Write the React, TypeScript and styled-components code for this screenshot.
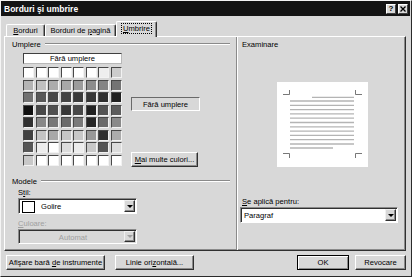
import React from 'react';
import styled, { createGlobalStyle } from 'styled-components';

const GlobalStyle = createGlobalStyle`
  html, body {
    margin: 0;
    padding: 0;
    background: #d8d8d8;
  }
  body {
    font-family: "Liberation Sans", Arial, sans-serif;
    font-size: 7.6px;
    color: #000;
  }
  #root {
    width: 412px;
    height: 277px;
  }
`;

const palette = [
  ['#ffffff', '#ffffff', '#ffffff', '#ffffff', '#ffffff', '#ffffff', '#eeeeee', '#cccccc'],
  ['#b4b4b4', '#c0c0c0', '#acacac', '#a8a8a8', '#9c9c9c', '#8c8c8c', '#848484', '#747474'],
  ['#727272', '#585858', '#484848', '#444444', '#3a3a3a', '#363636', '#2e2e2e', '#202020'],
  ['#101010', '#484848', '#505050', '#383838', '#484848', '#222222', '#545454', '#5c5c5c'],
  ['#303030', '#888888', '#787878', '#6c6c6c', '#7a7a7a', '#262626', '#6a6a6a', '#8a8a8a'],
  ['#404040', '#c4c4c4', '#a8a8a8', '#c6c6c6', '#c8c8c8', '#989898', '#303030', '#acacac'],
  ['#565656', '#ececec', '#ffffff', '#dcdcdc', '#ececec', '#c8c8c8', '#565656', '#dcdcdc'],
  ['#c8c8c8', '#ffffff', '#ffffff', '#ffffff', '#ffffff', '#ffffff', '#ffffff', '#ffffff'],
];

const Window = styled.div`
  box-sizing: border-box;
  width: 412px;
  height: 277px;
  background: #d8d8d8;
  border: 1px solid;
  border-color: #f4f4f4 #2a2a2a #2a2a2a #f4f4f4;
  display: flex;
  flex-direction: column;
`;

const TitleBar = styled.div`
  height: 15px;
  margin-right: 1px;
  padding: 0 2px 0 3px;
  background: #141414;
  display: flex;
  align-items: center;
  justify-content: space-between;
`;

const Title = styled.span`
  color: #fff;
  font-weight: bold;
  font-size: 8.5px;
`;

const CaptionButtons = styled.div`
  display: flex;
  gap: 2px;
`;

const CaptionButton = styled.div`
  box-sizing: border-box;
  width: 10px;
  height: 10px;
  background: #d8d8d8;
  border: 1px solid;
  border-color: #fff #404040 #404040 #fff;
  display: flex;
  align-items: center;
  justify-content: center;
  font-weight: bold;
  font-size: 8px;
  line-height: 1;
`;

const Body = styled.div`
  flex: 1;
  display: flex;
  flex-direction: column;
  padding: 0 5px 0 3px;
`;

const TabStrip = styled.div`
  margin-top: 6px;
  height: 14px;
  padding-left: 2px;
  display: flex;
  align-items: flex-end;
  position: relative;
  z-index: 1;
`;

const Tab = styled.div<{ $active?: boolean; $w: number }>`
  box-sizing: border-box;
  width: ${(p) => p.$w}px;
  height: ${(p) => (p.$active ? 16 : 12)}px;
  margin-bottom: ${(p) => (p.$active ? -1 : 0)}px;
  background: #d8d8d8;
  border: 1px solid;
  border-color: #fff #303030 transparent #fff;
  border-bottom: none;
  border-radius: 2px 2px 0 0;
  box-shadow: inset -1px 0 #8a8a8a;
  display: flex;
  align-items: center;
  justify-content: center;
  padding-bottom: ${(p) => (p.$active ? 2 : 0)}px;
`;

const FocusText = styled.span`
  outline: 1px dotted #000;
  outline-offset: 0;
  padding: 0 1px;
`;

const TabPanel = styled.div`
  box-sizing: border-box;
  height: 215px;
  border: 1px solid;
  border-color: #fff #303030 #303030 #fff;
  box-shadow: inset -1px -1px #8a8a8a;
  display: flex;
`;

const LeftCol = styled.div`
  width: 231px;
  display: flex;
  flex-direction: column;
`;

const Legend = styled.div<{ $top: number }>`
  margin-top: ${(p) => p.$top}px;
  height: 8px;
  padding: 0 6px 0 7px;
  display: flex;
  align-items: center;
  gap: 4px;
  &::after {
    content: '';
    flex: 1;
    height: 0;
    border-top: 1px solid #8a8a8a;
    border-bottom: 1px solid #fff;
  }
`;

const FillArea = styled.div`
  margin-top: 5px;
  height: 114px;
  padding-left: 18px;
  display: flex;
`;

const PaletteCol = styled.div`
  width: 99px;
  display: flex;
  flex-direction: column;
`;

const NoFillCell = styled.div`
  box-sizing: border-box;
  height: 11px;
  background: #fff;
  border: 1px solid;
  border-color: #404040 #b8b8b8 #b8b8b8 #404040;
  display: flex;
  align-items: center;
  justify-content: center;
`;

const Grid = styled.div`
  margin-top: 3px;
  display: grid;
  grid-template-columns: repeat(8, 11px);
  grid-auto-rows: 11px;
  gap: 1.5px;
`;

const Swatch = styled.div<{ $c: string }>`
  box-sizing: border-box;
  background: ${(p) => p.$c};
  border: 1px solid;
  border-color: #484848 #f2f2f2 #f2f2f2 #484848;
`;

const SideCol = styled.div`
  margin-left: 9px;
  display: flex;
  flex-direction: column;
`;

const ShadeDisplay = styled.div`
  box-sizing: border-box;
  margin-top: 44px;
  width: 69px;
  height: 14px;
  border: 1px solid;
  border-color: #6a6a6a #fff #fff #6a6a6a;
  display: flex;
  align-items: center;
  justify-content: center;
`;

const Button = styled.div<{ $w: number; $top?: number; $default?: boolean }>`
  box-sizing: border-box;
  width: ${(p) => p.$w}px;
  height: 15px;
  margin-top: ${(p) => p.$top ?? 0}px;
  background: #d8d8d8;
  border: 1px solid;
  border-color: ${(p) => (p.$default ? '#000' : '#fff #303030 #303030 #fff')};
  box-shadow: ${(p) =>
    p.$default ? 'inset 1px 1px #fff, inset -1px -1px #8a8a8a' : 'inset -1px -1px #8a8a8a'};
  display: flex;
  align-items: center;
  justify-content: center;
  white-space: nowrap;
`;

const FieldLabel = styled.div<{ $top: number; $disabled?: boolean }>`
  margin: ${(p) => p.$top}px 0 0 13px;
  height: 9px;
  display: flex;
  align-items: center;
  color: ${(p) => (p.$disabled ? '#a0a0a0' : '#000')};
`;

const Select = styled.div<{ $w: number; $h: number; $disabled?: boolean }>`
  box-sizing: border-box;
  width: ${(p) => p.$w}px;
  height: ${(p) => p.$h}px;
  margin: 1px 0 0 13px;
  background: ${(p) => (p.$disabled ? '#d8d8d8' : '#fff')};
  color: ${(p) => (p.$disabled ? '#a0a0a0' : '#000')};
  border: 1px solid;
  border-color: #8a8a8a #fff #fff #8a8a8a;
  box-shadow: inset 1px 1px #303030;
  display: flex;
  align-items: stretch;
  padding: 1px 1px 0 1px;
`;

const SelectValue = styled.div<{ $center?: boolean }>`
  flex: 1;
  display: flex;
  align-items: center;
  justify-content: ${(p) => (p.$center ? 'center' : 'flex-start')};
  gap: 6px;
  padding-left: 2px;
`;

const StyleSwatch = styled.div`
  box-sizing: border-box;
  width: 13px;
  height: 12px;
  background: #fff;
  border: 1px solid #000;
`;

const ArrowButton = styled.div<{ $disabled?: boolean }>`
  box-sizing: border-box;
  width: 11px;
  margin-bottom: 1px;
  background: #d8d8d8;
  border: 1px solid;
  border-color: #f0f0f0 #303030 #303030 #f0f0f0;
  box-shadow: inset -1px -1px #8a8a8a;
  display: flex;
  align-items: center;
  justify-content: center;
  &::after {
    content: '';
    border-left: 3px solid transparent;
    border-right: 3px solid transparent;
    border-top: 3px solid ${(p) => (p.$disabled ? '#a0a0a0' : '#000')};
  }
`;

const RightCol = styled.div`
  flex: 1;
  margin-right: 1px;
  border-left: 1px solid #8a8a8a;
  box-shadow: inset 1px 0 #fff;
  padding-left: 3px;
  display: flex;
  flex-direction: column;
`;

const SectionTitle = styled.div<{ $top: number }>`
  margin: ${(p) => p.$top}px 0 0 2px;
  height: 9px;
  display: flex;
  align-items: center;
`;

const Preview = styled.svg`
  display: block;
  margin: 33px 0 0 37px;
`;

const RightSelect = styled(Select)`
  margin: 1px 0 0 0;
`;

const ButtonRow = styled.div`
  margin-top: 4px;
  padding-left: 2px;
  display: flex;
  align-items: center;
`;

const Spacer = styled.div`
  flex: 1;
`;

const Gap = styled.div<{ $w: number }>`
  width: ${(p) => p.$w}px;
`;

function PagePreview() {
  const lines = Array.from({ length: 11 }, (_, i) => 19 + i * 4.3);
  return (
    <Preview width="91" height="85" viewBox="0 0 91 85">
      <rect width="91" height="85" fill="#fff" />
      <g stroke="#555" strokeWidth="0.8" fill="none">
        <path d="M6 12.5H12.5V8" />
        <path d="M85 12.5H78.5V8" />
        <path d="M6 71.5H12.5V76" />
        <path d="M85 71.5H78.5V76" />
      </g>
      <g stroke="#b4b4b4" strokeWidth="1.3">
        <line x1="35" y1="15.3" x2="77" y2="15.3" />
        {lines.map((y) => (
          <line key={y} x1="13" y1={y} x2="77" y2={y} />
        ))}
        <line x1="13" y1="66" x2="56" y2="66" />
      </g>
    </Preview>
  );
}

export default function App() {
  return (
    <>
      <GlobalStyle />
      <Window>
        <TitleBar>
          <Title>Borduri şi umbrire</Title>
          <CaptionButtons>
            <CaptionButton>?</CaptionButton>
            <CaptionButton>
              <svg width="6" height="6" viewBox="0 0 6 6">
                <path d="M0.5 0.5L5.5 5.5M5.5 0.5L0.5 5.5" stroke="#000" strokeWidth="1.3" />
              </svg>
            </CaptionButton>
          </CaptionButtons>
        </TitleBar>
        <Body>
          <TabStrip>
            <Tab $w={39}>
              <span>
                <u>B</u>orduri
              </span>
            </Tab>
            <Tab $w={71}>
              <span>
                Borduri de <u>p</u>agină
              </span>
            </Tab>
            <Tab $w={41} $active>
              <FocusText>
                <u>U</u>mbrire
              </FocusText>
            </Tab>
          </TabStrip>
          <TabPanel>
            <LeftCol>
              <Legend $top={3}>Umplere</Legend>
              <FillArea>
                <PaletteCol>
                  <NoFillCell>Fără umplere</NoFillCell>
                  <Grid>
                    {palette.flat().map((c, i) => (
                      <Swatch key={i} $c={c} />
                    ))}
                  </Grid>
                </PaletteCol>
                <SideCol>
                  <ShadeDisplay>Fără umplere</ShadeDisplay>
                  <Button $w={67} $top={41}>
                    <span>
                      <u>M</u>ai multe culori...
                    </span>
                  </Button>
                </SideCol>
              </FillArea>
              <Legend $top={10}>Modele</Legend>
              <FieldLabel $top={3}>
                <span>
                  S<u>t</u>il:
                </span>
              </FieldLabel>
              <Select $w={119} $h={16}>
                <SelectValue>
                  <StyleSwatch />
                  Golire
                </SelectValue>
                <ArrowButton />
              </Select>
              <FieldLabel $top={5} $disabled>
                <span>
                  <u>C</u>uloare:
                </span>
              </FieldLabel>
              <Select $w={119} $h={15} $disabled>
                <SelectValue $center>Automat</SelectValue>
                <ArrowButton $disabled />
              </Select>
            </LeftCol>
            <RightCol>
              <SectionTitle $top={3}>Examinare</SectionTitle>
              <PagePreview />
              <SectionTitle $top={30}>
                <span>
                  <u>S</u>e aplică pentru:
                </span>
              </SectionTitle>
              <RightSelect $w={158} $h={16}>
                <SelectValue>Paragraf</SelectValue>
                <ArrowButton />
              </RightSelect>
            </RightCol>
          </TabPanel>
          <ButtonRow>
            <Button $w={99}>
              <span>
                Afişare bară <u>d</u>e instrumente
              </span>
            </Button>
            <Gap $w={10} />
            <Button $w={79}>
              <span>
                Linie ori<u>z</u>ontală...
              </span>
            </Button>
            <Spacer />
            <Button $w={52} $default>
              OK
            </Button>
            <Gap $w={6} />
            <Button $w={51}>Revocare</Button>
          </ButtonRow>
        </Body>
      </Window>
    </>
  );
}
